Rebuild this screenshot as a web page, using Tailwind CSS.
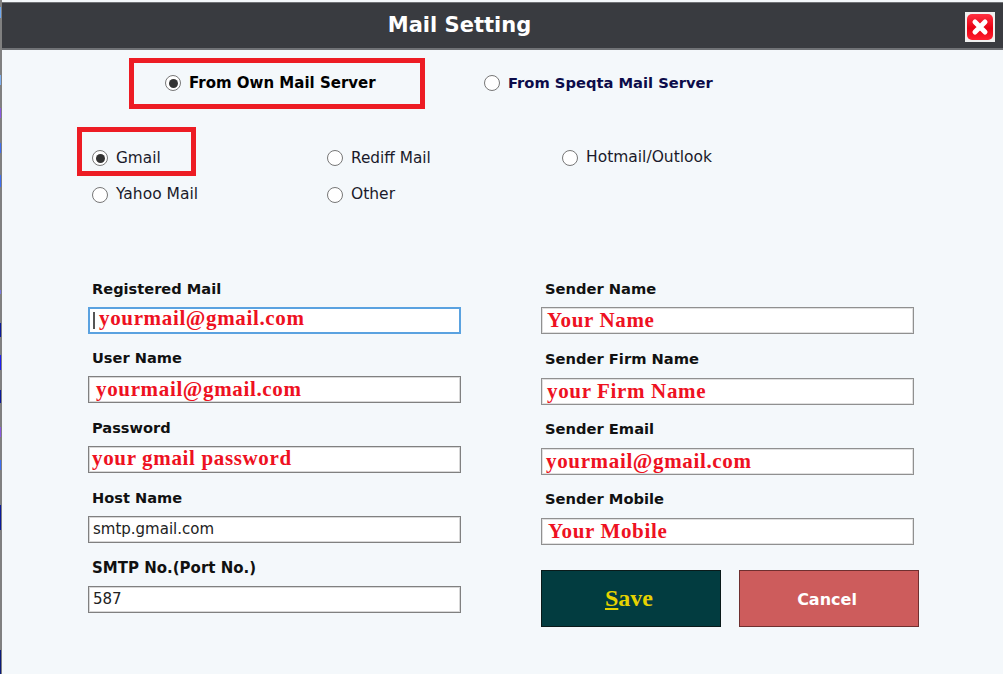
<!DOCTYPE html>
<html>
<head>
<meta charset="utf-8">
<script src="https://cdn.jsdelivr.net/npm/@tailwindcss/browser@4"></script>
</head>
<body class="m-0 bg-white">
<div class="flow-root relative w-[1003px] h-[674px] bg-[#f4f8fb] font-['DejaVu_Sans',sans-serif] border-l-2 border-[#808080]">
  <header class="relative mt-[2px] h-[48px] bg-[#393b40] border-b-2 border-t border-[#707276] flex items-center justify-center text-white font-bold text-[21px] pr-[86px]">
    <span>Mail Setting</span>
    <span class="absolute left-[963px] top-[9px] w-[30px] h-[30px] bg-[#f0f0f0] p-[1px]">
      <svg viewBox="0 0 28 28" class="w-full h-full"><defs><linearGradient id="g" x1="0" y1="0" x2="0" y2="1"><stop offset="0" stop-color="#ff3040"/><stop offset="0.55" stop-color="#e80012"/><stop offset="1" stop-color="#ff2030"/></linearGradient></defs><rect x="1" y="1" width="26" height="26" rx="5" fill="url(#g)"/><path d="M9 9L19 19M19 9L9 19" stroke="#fff" stroke-width="5" stroke-linecap="round"/></svg>
    </span>
  </header>

  <section class="flex pl-[163px] pt-[25px] h-[76px] text-[15px] font-bold text-black">
    <label class="flex items-center h-[16px] gap-[8px] w-[319px]">
      <span class="w-[16px] h-[16px] rounded-full border-[1.5px] border-[#777] bg-white flex items-center justify-center"><span class="w-[9px] h-[9px] rounded-full bg-[#333]"></span></span>
      From Own Mail Server
    </label>
    <label class="flex items-center h-[16px] gap-[8px] text-[14.7px] text-[#0c0c4a]">
      <span class="w-[16px] h-[16px] rounded-full border-[1.5px] border-[#777] bg-white"></span>
      From Speqta Mail Server
    </label>
  </section>

  <section class="grid grid-cols-[235px_235px_200px] grid-rows-[16px_16px] gap-y-[21px] pl-[90px] pt-[24px] h-[100px] text-[15.3px] text-[#1a1a2a]">
    <label class="flex items-center gap-[8px]"><span class="w-[16px] h-[16px] rounded-full border-[1.5px] border-[#777] bg-white flex items-center justify-center"><span class="w-[9px] h-[9px] rounded-full bg-[#333]"></span></span>Gmail</label>
    <label class="flex items-center gap-[8px]"><span class="w-[16px] h-[16px] rounded-full border-[1.5px] border-[#777] bg-white"></span>Rediff Mail</label>
    <label class="flex items-center gap-[8px]"><span class="w-[16px] h-[16px] rounded-full border-[1.5px] border-[#777] bg-white"></span><span class="text-[15.5px]">Hotmail/Outlook</span></label>
    <label class="flex items-center gap-[8px]"><span class="w-[16px] h-[16px] rounded-full border-[1.5px] border-[#777] bg-white"></span><span class="text-[15.5px]">Yahoo Mail</span></label>
    <label class="flex items-center gap-[8px]"><span class="w-[16px] h-[16px] rounded-full border-[1.5px] border-[#777] bg-white"></span><span class="text-[15.5px]">Other</span></label>
  </section>

  <main class="flex pl-[86px] pt-[54px] gap-[80px]">
    <div class="w-[373px] flex flex-col">
      <div class="h-[69px]">
        <div class="pl-[4px] h-[27px] text-[14.6px] font-bold text-[#111] leading-[18px]">Registered Mail</div>
        <div class="h-[27px] bg-white border-2 border-[#5aa2e0] flex items-center pl-[3px] font-['Liberation_Serif',serif] font-bold text-[21px] tracking-[0.65px] text-[#ee1122]"><span class="w-[2px] h-[17px] bg-[#555] mr-[4px]"></span><span class="-mt-[3px]">yourmail@gmail.com</span></div>
      </div>
      <div class="h-[70px]">
        <div class="pl-[4px] h-[27px] text-[14.6px] font-bold text-[#111] leading-[18px]">User Name</div>
        <div class="h-[27px] bg-white border border-[#808080] shadow-[inset_0_0_0_1px_#d8d8d8] flex items-center pl-[7px] font-['Liberation_Serif',serif] font-bold text-[21px] tracking-[0.65px] text-[#ee1122]">yourmail@gmail.com</div>
      </div>
      <div class="h-[70px]">
        <div class="pl-[4px] h-[27px] text-[14.6px] font-bold text-[#111] leading-[18px]">Password</div>
        <div class="h-[27px] bg-white border border-[#808080] shadow-[inset_0_0_0_1px_#d8d8d8] flex items-center pl-[3px] font-['Liberation_Serif',serif] font-bold text-[21px] tracking-[0.65px] text-[#ee1122]"><span class="-mt-[1px]">your gmail password</span></div>
      </div>
      <div class="h-[70px]">
        <div class="pl-[4px] h-[27px] text-[14.6px] font-bold text-[#111] leading-[18px]">Host Name</div>
        <div class="h-[27px] bg-white border border-[#808080] shadow-[inset_0_0_0_1px_#d8d8d8] flex items-center pl-[4px] text-[15px] text-[#222]">smtp.gmail.com</div>
      </div>
      <div class="h-[69px]">
        <div class="pl-[4px] h-[27px] text-[15px] font-bold text-[#111] leading-[18px]">SMTP No.(Port No.)</div>
        <div class="h-[27px] bg-white border border-[#808080] shadow-[inset_0_0_0_1px_#d8d8d8] flex items-center pl-[4px] text-[15px] text-[#222]">587</div>
      </div>
    </div>
    <div class="w-[378px] flex flex-col">
      <div class="h-[70px]">
        <div class="pl-[4px] h-[27px] text-[14.7px] font-bold text-[#111] leading-[18px]">Sender Name</div>
        <div class="w-[373px] h-[27px] bg-white border border-[#909090] shadow-[inset_0_0_0_1px_#e0e0e0] flex items-center pl-[5px] font-['Liberation_Serif',serif] font-bold text-[21px] tracking-[0.65px] text-[#ee1122]">Your Name</div>
      </div>
      <div class="h-[70px]">
        <div class="pl-[4px] h-[28px] text-[14.7px] font-bold text-[#111] leading-[18px]">Sender Firm Name</div>
        <div class="w-[373px] h-[27px] bg-white border border-[#909090] shadow-[inset_0_0_0_1px_#e0e0e0] flex items-center pl-[5px] font-['Liberation_Serif',serif] font-bold text-[21px] tracking-[0.65px] text-[#ee1122]">your Firm Name</div>
      </div>
      <div class="h-[70px]">
        <div class="pl-[4px] h-[28px] text-[14.7px] font-bold text-[#111] leading-[18px]">Sender Email</div>
        <div class="w-[373px] h-[27px] bg-white border border-[#909090] shadow-[inset_0_0_0_1px_#e0e0e0] flex items-center pl-[4px] font-['Liberation_Serif',serif] font-bold text-[21px] tracking-[0.65px] text-[#ee1122]">yourmail@gmail.com</div>
      </div>
      <div class="h-[70px]">
        <div class="pl-[4px] h-[28px] text-[14.7px] font-bold text-[#111] leading-[18px]">Sender Mobile</div>
        <div class="w-[373px] h-[27px] bg-white border border-[#909090] shadow-[inset_0_0_0_1px_#e0e0e0] flex items-center pl-[6px] font-['Liberation_Serif',serif] font-bold text-[21px] tracking-[0.65px] text-[#ee1122]">Your Mobile</div>
      </div>
      <div class="flex gap-[18px] mt-[10px]">
        <button class="w-[180px] h-[57px] bg-[#023c40] border border-[#0a1a1a] font-['Liberation_Serif',serif] font-bold text-[24px] text-[#e6d200] flex items-center justify-center pr-[4px] pb-[2px]"><span><span class="underline">S</span>ave</span></button>
        <button class="w-[180px] h-[57px] bg-[#cd5c5c] border border-[#6f2f2f] font-bold text-[16px] text-white flex items-center justify-center pr-[4px] pt-[2px]">Cancel</button>
      </div>
    </div>
  </main>

  <div class="absolute left-[127px] top-[58px] w-[296px] h-[51px] border-[5px] border-[#ed1c24]"></div>
  <div class="absolute left-[75px] top-[127px] w-[119px] h-[49px] border-[5px] border-[#ed1c24]"></div>

  <div class="absolute -left-[2px] top-0 w-[1px] h-full">
    <div class="absolute top-[7px] h-[11px] w-full bg-[#6fa8f0]"></div>
    <div class="absolute top-[75px] h-[10px] w-full bg-[#7fb0f0]"></div>
    <div class="absolute top-[108px] h-[10px] w-full bg-[#8a5ae0]"></div>
    <div class="absolute top-[143px] h-[10px] w-full bg-[#3f6ff0]"></div>
    <div class="absolute top-[175px] h-[12px] w-full bg-[#3f6ff0]"></div>
    <div class="absolute top-[290px] h-[4px] w-full bg-[#7a7ae0]"></div>
    <div class="absolute top-[323px] h-[14px] w-full bg-[#0a1a9a]"></div>
    <div class="absolute top-[355px] h-[15px] w-full bg-[#2020f0]"></div>
    <div class="absolute top-[390px] h-[13px] w-full bg-[#0a1a9a]"></div>
    <div class="absolute top-[427px] h-[10px] w-full bg-[#8a5ae0]"></div>
    <div class="absolute top-[460px] h-[10px] w-full bg-[#3f6ff0]"></div>
    <div class="absolute top-[505px] h-[25px] w-full bg-[#0a1a9a]"></div>
    <div class="absolute top-[650px] h-[24px] w-full bg-[#0a1a7a]"></div>
  </div>
</div>
</body>
</html>
